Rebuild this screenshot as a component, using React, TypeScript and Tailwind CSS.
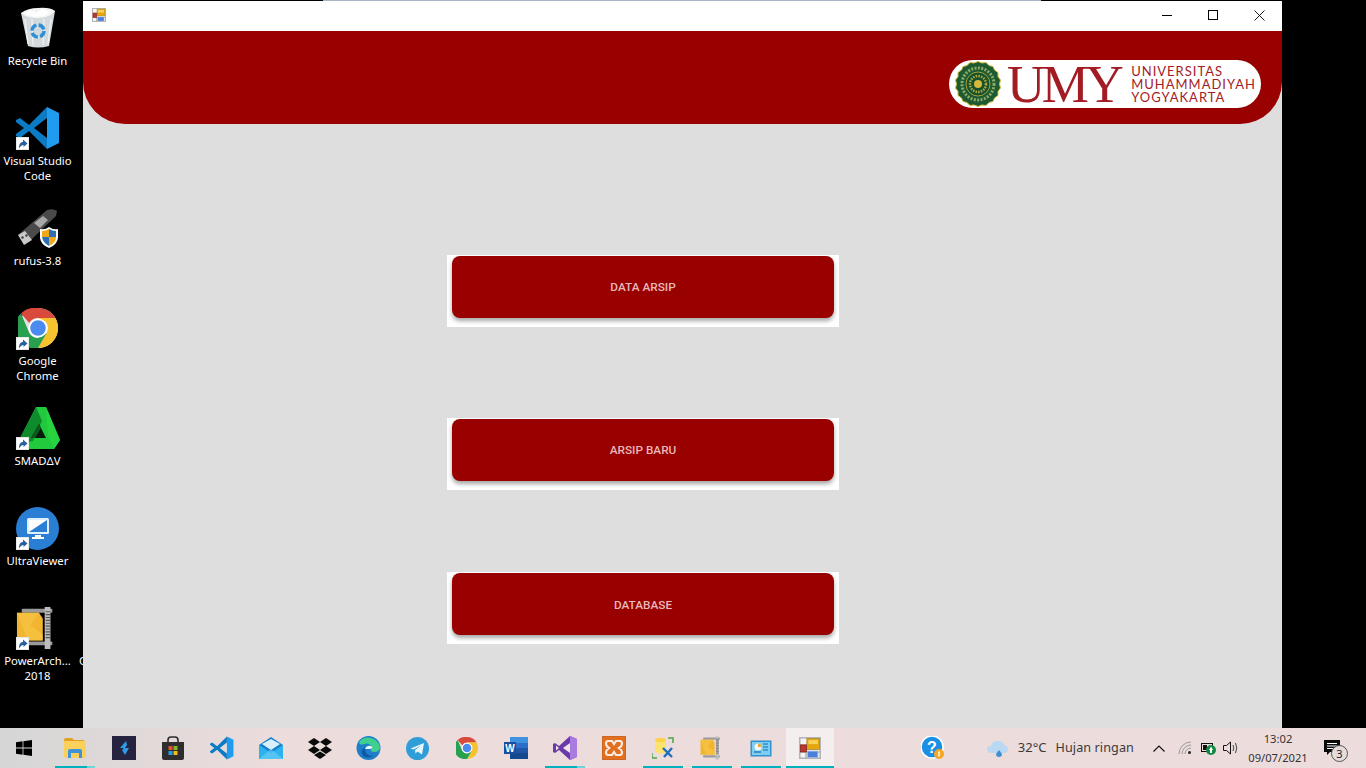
import React from "react";

const Shortcut = () => (
  <svg className="absolute left-0 bottom-0" width="13" height="13" viewBox="0 0 13 13">
    <rect width="13" height="13" fill="#e8e8e8" />
    <rect x="1" y="1" width="11" height="11" fill="#fff" />
    <path d="M3 11.5 C3 7 4.5 5 7 5 L7 2.5 L11.5 6.5 L7.5 10 L7.5 8 C5.5 8 4.5 9.5 3 11.5 Z" fill="#2a5f9e" />
  </svg>
);

const RecycleBin = () => (
  <svg width="36" height="42" viewBox="0 0 36 42">
    <path d="M1 6 L35 4 L29 39 Q18 42 8 39 Z" fill="#d4d9dc" />
    <path d="M1 6 Q8 1 18 1 Q30 0 35 4 Q30 11 18 11 Q6 11 1 6 Z" fill="#f3f4f5" />
    <path d="M5 7 L10 3 L16 6 L22 2 L30 5 L24 9 L14 10 Z" fill="#ffffff" />
    <path d="M5 12 L8 37 M12 12 L13 38 M24 12 L23 38 M31 12 L28 37" stroke="#eef0f1" strokeWidth="1.4" />
    <circle cx="18" cy="24" r="6" fill="none" stroke="#2c8fd8" strokeWidth="3.4" strokeDasharray="7 2.4" />
  </svg>
);

const VSCodeIcon = ({ size = 44 }: { size?: number }) => (
  <svg width={size} height={size} viewBox="0 0 44 44">
    <path d="M31 1 L43 7 L43 37 L31 43 L31 1 Z" fill="#1f9cf0" />
    <path d="M31 1 L13 19 L4 12 L0 14 L0 16 L8 22 L0 28 L0 30 L4 32 L13 25 L31 43 L31 32 L18 22 L31 12 Z" fill="#0a7bc4" />
  </svg>
);

const Rufus = () => (
  <svg width="42" height="42" viewBox="0 0 42 42">
    <path d="M2 27 L30 3 Q36 1 40 4 L39 9 L14 33 Z" fill="#4a4a4a" />
    <path d="M17 16 L26 9 L31 13 L23 21 Z" fill="#a8a8a8" />
    <path d="M1 28 L8 24 L15 33 L7 38 Z" fill="#c9c9c9" />
    <path d="M4 30 l2 -1 1 2 -2 1z M8 28 l2 -1 1 2 -2 1z" fill="#444" />
    <path d="M32 20 Q36 23 41 22 L41 31 Q40 38 32 41 Q24 38 23 31 L23 22 Q28 23 32 20 Z" fill="#fff" />
    <path d="M32 22 Q29 24 25 24 L25 30 L32 30 Z M32 30 L32 39 Q39 36 39 30 Z" fill="#f0a818" />
    <path d="M32 22 L32 30 L39 30 L39 24 Q35 24 32 22 Z M32 30 L25 30 Q26 36 32 39 Z" fill="#2f6db5" />
  </svg>
);

const Chrome = ({ size = 40 }: { size?: number }) => (
  <svg width={size} height={size} viewBox="0 0 40 40">
    <circle cx="20" cy="20" r="20" fill="#e0e0e0" />
    <path d="M20 0 A20 20 0 0 1 37.3 10 L20 10 A10 10 0 0 0 11.3 15 L3 5.5 A20 20 0 0 1 20 0 Z" fill="#d9493c" />
    <path d="M37.3 10 A20 20 0 0 1 20 40 L28.7 25 A10 10 0 0 0 28.7 15 L20 10 Z" fill="#f6c22d" />
    <path d="M20 40 A20 20 0 0 1 3 5.5 L11.3 25 A10 10 0 0 0 20 30 L28.7 25 Z" fill="#27a050" />
    <circle cx="20" cy="20" r="9.6" fill="#fff" />
    <circle cx="20" cy="20" r="7.8" fill="#4b8bf0" />
  </svg>
);

const Smadav = () => (
  <svg width="44" height="44" viewBox="0 0 44 44">
    <path d="M20 1 L30 1 L44 34 L38 43 L5 43 L1 38 Z" fill="#22c93c" />
    <path d="M20 1 L26 15 L17 35 L1 38 Z" fill="#0e8c2b" />
    <path d="M23 18 L30 32 L15 32 Z" fill="#071a0b" />
    <path d="M23 18 L15 32 L19 32 L25 22 Z" fill="#0c5a1e" />
    <path d="M30 1 L44 34 L38 43 L32 30 Z" fill="#27d43f" />
  </svg>
);

const Ultra = () => (
  <svg width="43" height="43" viewBox="0 0 43 43">
    <circle cx="21.5" cy="21.5" r="21.5" fill="#2a7fd4" />
    <rect x="11" y="11" width="22" height="16" rx="1.5" fill="#dfeefb" />
    <path d="M13 13 H31 L13 25 Z" fill="#ffffff" />
    <path d="M31 13 V25 H13 Z" fill="#2a7fd4" />
    <path d="M19 28 h6 v2 h3 v2 h-12 v-2 h3 z" fill="#fff" />
  </svg>
);

const PowerArch = ({ size = 46 }: { size?: number }) => (
  <svg width={size} height={size} viewBox="0 0 46 46">
    <rect x="6" y="3" width="32" height="4" rx="1" fill="#9a9a9a" />
    <rect x="6" y="37" width="32" height="4" rx="1" fill="#9a9a9a" />
    <rect x="30" y="1" width="6" height="44" fill="#bdbdbd" />
    <path d="M31 6 h5 M31 9 h5 M31 12 h5 M31 15 h5 M31 18 h5 M31 21 h5 M31 24 h5 M31 27 h5 M31 30 h5 M31 33 h5" stroke="#555" strokeWidth="1.2" />
    <path d="M1 7 H24 L28 13 V36 H1 Z" fill="#f1b52f" />
    <path d="M1 7 H24 L15 20 L28 30 V36 H12 Z" fill="#f5c544" opacity="0.7" />
  </svg>
);

const AppGlyph = ({ size = 16 }: { size?: number }) => (
  <svg width={size} height={size} viewBox="0 0 14 14">
    <rect x="0.5" y="0.5" width="13" height="13" fill="#f4f4f4" stroke="#b4b4b4" />
    <path d="M0.5 9.5 H13.5 M4.5 9.5 V13.5" stroke="#b4b4b4" />
    <rect x="5" y="1" width="8" height="7" fill="#e4a80e" stroke="#a88a3a" strokeWidth="0.5" />
    <rect x="6" y="2" width="6" height="2.5" fill="#f6d35a" />
    <rect x="1" y="5" width="3.8" height="4.5" fill="#c0352b" stroke="#7d231d" strokeWidth="0.5" />
    <rect x="5.5" y="9" width="6.5" height="4" fill="#4a80d8" stroke="#9fb9e4" strokeWidth="0.5" />
  </svg>
);

function DesktopItem({ label, icon, shortcut }: { label: React.ReactNode; icon: React.ReactNode; shortcut?: boolean }) {
  return (
    <div className="h-[100px] w-[75px] shrink-0 flex flex-col items-center">
      <div className="relative w-[44px] h-[44px] mt-[6px] flex items-center justify-center">
        {icon}
        {shortcut && <Shortcut />}
      </div>
      <div className="mt-[3px] text-center text-white text-[11.3px] leading-[15px] font-['Noto_Sans','Open_Sans',sans-serif] whitespace-nowrap">{label}</div>
    </div>
  );
}

const Seal = () => (
  <svg width="46" height="46" viewBox="0 0 46 46">
    <path d="M23 0.5 L27 2 L31 1.5 L34 4.5 L38 5.5 L39.5 9 L43 11.5 L43 15.5 L45.5 19 L44.5 23 L45.5 27 L43 30.5 L43 34.5 L39.5 37 L38 40.5 L34 41.5 L31 44.5 L27 44 L23 45.5 L19 44 L15 44.5 L12 41.5 L8 40.5 L6.5 37 L3 34.5 L3 30.5 L0.5 27 L1.5 23 L0.5 19 L3 15.5 L3 11.5 L6.5 9 L8 5.5 L12 4.5 L15 1.5 L19 2 Z" fill="#1c5b32" stroke="#d8bd3e" strokeWidth="1" />
    <circle cx="23" cy="23" r="16" fill="none" stroke="#8fa866" strokeWidth="3" strokeDasharray="2 1.4" />
    <circle cx="23" cy="23" r="12" fill="#15512c" stroke="#c9b23e" strokeWidth="0.8" />
    <circle cx="23" cy="23" r="8" fill="none" stroke="#b7a83c" strokeWidth="2.5" strokeDasharray="1.5 1.2" />
    <circle cx="23" cy="23" r="4" fill="#d6b93a" />
  </svg>
);

function AppButton({ label, tall }: { label: string; tall?: boolean }) {
  return (
    <div className="w-[392px] h-[72px] bg-white pt-px px-[5px]">
      <div className={`h-[62px] rounded-[8px] bg-[#990000] shadow-[0_3px_4px_rgba(0,0,0,0.35)] flex items-center justify-center text-[11.8px] font-medium text-[#e9b8b8] font-['Roboto',sans-serif] ${tall ? "pt-[4px]" : "pt-[2px]"}`}>
        {label}
      </div>
    </div>
  );
}

function TaskCell({ children, state, wide }: { children: React.ReactNode; state?: "run" | "open" | "active"; wide?: boolean }) {
  const size = wide ? "w-[50px] pr-[2px]" : state === "active" ? "w-[48px] ml-px bg-[#f4eeee]" : "w-[49px]";
  return (
    <div className={`relative h-[40px] shrink-0 flex items-center justify-center ${size}`}>
      {children}
      {(state === "run" || state === "open") && (
        <div className="absolute bottom-0 left-[5px] w-[40px] h-[2px] flex">
          <div className={`h-full ${state === "open" ? "w-[32px]" : "w-full"} bg-[#00b2bd]`} />
          {state === "open" && <div className="h-full w-[8px] bg-[#6fd3d8]" />}
        </div>
      )}
      {state === "active" && <div className="absolute bottom-0 left-0 right-0 h-[2px] bg-[#00b2bd]" />}
    </div>
  );
}

export default function App() {
  return (
    <div className="w-[1366px] h-[768px] overflow-hidden bg-black flex flex-col font-['Noto_Sans',sans-serif]">
      <div className="h-[728px] flex shrink-0">
        <div className="relative w-[83px] shrink-0 overflow-hidden flex flex-col items-start">
          <DesktopItem label="Recycle Bin" icon={<RecycleBin />} />
          <DesktopItem label={<>Visual Studio<br />Code</>} icon={<VSCodeIcon />} shortcut />
          <DesktopItem label="rufus-3.8" icon={<Rufus />} />
          <DesktopItem label={<>Google<br />Chrome</>} icon={<Chrome />} shortcut />
          <DesktopItem label="SMADΔV" icon={<Smadav />} shortcut />
          <DesktopItem label="UltraViewer" icon={<Ultra />} shortcut />
          <DesktopItem label={<>PowerArch...<br />2018</>} icon={<PowerArch />} shortcut />
          <div className="absolute left-[79px] top-[653px] text-white text-[11.3px] leading-[15px]">C</div>
        </div>
        <div className="w-[1199px] shrink-0 flex flex-col">
          <div className="h-px shrink-0 bg-black flex">
            <div className="ml-[240px] w-[718px] h-full bg-[#a9b4c8]" />
          </div>
          <div className="h-[30px] shrink-0 bg-white flex items-center text-black">
            <div className="ml-[9px] mt-[-2px]"><AppGlyph size={14} /></div>
            <div className="ml-auto flex items-center mt-[-2px]">
              <div className="w-[46px] flex justify-center">
                <svg width="10" height="10" viewBox="0 0 10 10"><path d="M0 5.5 H10" stroke="#000" strokeWidth="1" /></svg>
              </div>
              <div className="w-[46px] flex justify-center">
                <svg width="10" height="10" viewBox="0 0 10 10"><rect x="0.5" y="0.5" width="9" height="9" fill="none" stroke="#000" /></svg>
              </div>
              <div className="w-[46px] flex justify-center">
                <svg width="11" height="11" viewBox="0 0 11 11"><path d="M0.5 0.5 L10.5 10.5 M10.5 0.5 L0.5 10.5" stroke="#000" strokeWidth="0.9" /></svg>
              </div>
            </div>
          </div>
          <div className="flex-1 bg-[#dedede] flex flex-col">
            <div className="h-[93px] shrink-0 bg-[#990000] rounded-b-[42px] flex justify-end items-start pt-[29px] pr-[21px]">
              <div className="w-[312px] h-[48px] bg-white rounded-full flex items-center pl-[6px]">
                <Seal />
                <div className="ml-[6px] text-[53px] leading-none text-[#a31c24] font-['Liberation_Serif',serif] tracking-[-3.5px]">UMY</div>
                <div className="ml-[11px] text-[13px] leading-[13px] text-[#a31c24] font-['Lato',sans-serif] tracking-[1px] whitespace-nowrap">
                  UNIVERSITAS<br />MUHAMMADIYAH<br />YOGYAKARTA
                </div>
              </div>
            </div>
            <div className="flex flex-col pl-[364px] pt-[131px]">
              <AppButton label="DATA ARSIP" />
              <div className="h-[91px]" />
              <AppButton label="ARSIP BARU" />
              <div className="h-[82px]" />
              <AppButton label="DATABASE" tall />
            </div>
          </div>
        </div>
      </div>
      <div className="h-[40px] shrink-0 flex items-center bg-gradient-to-r from-[#d6d6d6] via-[#ecdcdc] via-20% to-[#eddcdc]">
        <TaskCell wide>
          <svg width="16" height="16" viewBox="0 0 16 16"><path d="M0 2.2 L6.6 1.3 V7.5 H0 Z M7.4 1.2 L16 0 V7.5 H7.4 Z M0 8.4 H6.6 V14.7 L0 13.8 Z M7.4 8.4 H16 V16 L7.4 14.8 Z" fill="#000" /></svg>
        </TaskCell>
        <TaskCell state="open">
          <svg width="22" height="20" viewBox="0 0 22 20"><path d="M0 2 Q0 0 2 0 H8 L10 2 H20 V4 H0 Z" fill="#e0a020" /><path d="M0 3 H21 Q22 3 22 4 V18 Q22 20 20 20 H2 Q0 20 0 18 Z" fill="#fbd05c" /><path d="M4 20 V13 Q4 11 6 11 H16 Q18 11 18 13 V20 H15 V15 H7 V20 Z" fill="#3f93d8" /></svg>
        </TaskCell>
        <TaskCell>
          <svg width="24" height="24" viewBox="0 0 24 24"><rect width="24" height="24" fill="#25233f" /><path d="M14 5 L8 12 H12 L10 14 L13 19 L17 12 H13 L15 9 Z" fill="#2e9be8" /></svg>
        </TaskCell>
        <TaskCell>
          <svg width="24" height="24" viewBox="0 0 24 24"><path d="M7 7 V4 Q7 1 10 1 H14 Q17 1 17 4 V7" stroke="#2b2b2b" strokeWidth="1.6" fill="none" /><path d="M1 6 H23 V22 Q23 24 21 24 H3 Q1 24 1 22 Z" fill="#2f2d2d" /><rect x="7.5" y="10" width="4" height="4" fill="#e8532a" /><rect x="12.5" y="10" width="4" height="4" fill="#7fba2a" /><rect x="7.5" y="15" width="4" height="4" fill="#1ba1e8" /><rect x="12.5" y="15" width="4" height="4" fill="#fdb913" /></svg>
        </TaskCell>
        <TaskCell><VSCodeIcon size={24} /></TaskCell>
        <TaskCell>
          <svg width="24" height="24" viewBox="0 0 24 24"><path d="M12 1 L24 9 V23 H0 V9 Z" fill="#1780d0" /><path d="M0 9 L12 17 L24 9 V23 H0 Z" fill="#2cb3ee" /><path d="M3 8 L12 3 L21 8 L12 14 Z" fill="#d8f0fb" /><path d="M0 23 L12 13 L24 23 Z" fill="#6fd0f5" opacity="0.6" /></svg>
        </TaskCell>
        <TaskCell>
          <svg width="24" height="22" viewBox="0 0 24 22"><path d="M6 1 L12 5 L6 9 L0 5 Z M18 1 L24 5 L18 9 L12 5 Z M6 9 L12 13 L6 17 L0 13 Z M18 9 L24 13 L18 17 L12 13 Z M6 18 L12 14.5 L18 18 L12 22 Z" fill="#0a0a0a" /></svg>
        </TaskCell>
        <TaskCell>
          <svg width="25" height="24" viewBox="0 0 25 24"><circle cx="12.5" cy="12" r="12" fill="#1e7fc8" /><path d="M3 6 A12 12 0 0 1 24 11 Q24 16 18 16 Q13 16 16 11 Q13 6 8 8 Q4 10 3 6 Z" fill="#3fcf8e" /><path d="M9 12 Q9 20 17 20 Q12 23 7 20 Q3 14 9 12 Z" fill="#0d5aa7" /><path d="M9 13 Q11 9 15 10 Q18 12 14 13 Z" fill="#f1f8fb" /></svg>
        </TaskCell>
        <TaskCell>
          <svg width="23" height="23" viewBox="0 0 23 23"><circle cx="11.5" cy="11.5" r="11.5" fill="#2f9ed8" /><path d="M4.5 11.5 L18 6 L16 17.5 L11.5 14.5 L9.5 16.5 L9 13 L15 8.5 L7.5 12.5 Z" fill="#e9f5fb" /></svg>
        </TaskCell>
        <TaskCell><Chrome size={22} /></TaskCell>
        <TaskCell>
          <svg width="24" height="22" viewBox="0 0 24 22"><rect x="6" y="0" width="18" height="22" fill="#2a6fc9" /><rect x="6" y="0" width="18" height="6" fill="#3f92e0" /><rect x="6" y="11" width="18" height="5" fill="#1f56a5" /><rect x="6" y="16" width="18" height="6" fill="#164a8f" /><rect x="0" y="5" width="12" height="12" fill="#1a4fa0" /><text x="6" y="14.5" textAnchor="middle" fontSize="10" fontWeight="700" fill="#fff" fontFamily="Liberation Sans">W</text></svg>
        </TaskCell>
        <TaskCell state="open">
          <svg width="24" height="24" viewBox="0 0 24 24"><path d="M17 0 L24 3 V21 L17 24 L6 14 L2 17 L0 16 V8 L2 7 L6 10 Z" fill="#6a3aa8" /><path d="M17 0 L24 3 V21 L17 24 Z" fill="#a97be0" /><path d="M17 7 L10 12 L17 17 Z" fill="#f0e4e4" /><path d="M3 9.5 L6 12 L3 14.5 Z" fill="#f0e4e4" /></svg>
        </TaskCell>
        <TaskCell>
          <svg width="24" height="24" viewBox="0 0 24 24"><rect width="24" height="24" rx="2" fill="#e0701f" stroke="#b85a1e" /><path d="M6 5 H10 L12 8 L14 5 H18 Q20 5 20 8 Q20 10 17 12 Q20 14 20 16 Q20 19 18 19 H14 L12 16 L10 19 H6 Q4 19 4 16 Q4 14 7 12 Q4 10 4 8 Q4 5 6 5 Z" fill="none" stroke="#fbeadf" strokeWidth="2.2" /></svg>
        </TaskCell>
        <TaskCell state="run">
          <svg width="22" height="22" viewBox="0 0 22 22"><path d="M0 16 V21 H5 M16 1 H21 V6" stroke="#4fa34a" strokeWidth="1.5" fill="none" /><path d="M3 4 Q3 1 9 1 Q14 1 14 4 V15 Q10 18 3 15 Z" fill="#fde36e" /><ellipse cx="8.5" cy="3" rx="5.5" ry="2.2" fill="#fbd24a" /><path d="M12 20 L20 11 M11 11 L20 20" stroke="#1f6fb8" strokeWidth="2.4" /></svg>
        </TaskCell>
        <TaskCell state="run"><PowerArch size={24} /></TaskCell>
        <TaskCell state="run">
          <svg width="22" height="17" viewBox="0 0 22 17"><rect x="0.5" y="0.5" width="21" height="16" rx="1" fill="#2f95d6" stroke="#8eb3cc" /><rect x="2" y="2" width="18" height="13" fill="#7fcdf0" /><circle cx="8" cy="7" r="3.5" fill="#f5f7fa" /><path d="M8 7 V3.5 A3.5 3.5 0 0 1 11.5 7 Z" fill="#eca82c" /><path d="M13 4 H18 M13 7 H18 M13 10 H18" stroke="#0d6fb0" strokeWidth="1.2" /><path d="M4 12 H11" stroke="#0d6fb0" strokeWidth="1.2" /></svg>
        </TaskCell>
        <TaskCell state="active"><AppGlyph size={22} /></TaskCell>
        <div className="flex items-center ml-auto h-full text-[#3a3a3a] font-['Noto_Sans',sans-serif]">
          <div className="relative w-[24px] h-[24px] mr-[42px]">
            <svg width="24" height="24" viewBox="0 0 24 24"><circle cx="11" cy="11" r="11" fill="#1a8fe3" stroke="#fff" strokeWidth="1.5" /><text x="11" y="17" textAnchor="middle" fontSize="16" fontWeight="700" fill="#fff" fontFamily="Liberation Sans">?</text><circle cx="18" cy="18" r="5" fill="#f5a623" /><rect x="17.3" y="15.5" width="1.5" height="5" fill="#fff" /></svg>
          </div>
          <svg width="21" height="17" viewBox="0 0 21 17"><path d="M5 13 Q0 13 0 9 Q0 6 4 6 Q5 1 11 1 Q16 1 17 5 Q21 6 21 9 Q21 13 17 13 Z" fill="#b9d9f2" /><path d="M12 10 L15 14 Q15 17 12 17 Q9 17 9 14 Z" fill="#3f8fd6" /></svg>
          <div className="ml-[10px] text-[13px] whitespace-nowrap">32°C</div>
          <div className="ml-[9px] text-[12.6px] whitespace-nowrap tracking-[0.1px]">Hujan ringan</div>
          <svg className="ml-[19px]" width="12" height="7" viewBox="0 0 12 7"><path d="M0.5 6.5 L6 1 L11.5 6.5" fill="none" stroke="#111" strokeWidth="1.2" /></svg>
          <svg className="ml-[13px]" width="14" height="14" viewBox="0 0 14 14"><path d="M1 13 A12 12 0 0 1 13 1 M4 13 A9 9 0 0 1 13 4 M7 13 A6 6 0 0 1 13 7" fill="none" stroke="#9a9a9a" strokeWidth="1" /><circle cx="11.5" cy="11.5" r="1.5" fill="#222" /></svg>
          <svg className="ml-[9px]" width="15" height="14" viewBox="0 0 15 14"><rect x="0.5" y="2.5" width="11" height="8" fill="none" stroke="#111" /><rect x="2" y="4" width="4" height="5" fill="#111" /><circle cx="10" cy="9" r="5" fill="#138a43" /><path d="M10 5.5 L12 9 H11 V12 H9 V9 H8 Z" fill="#fff" /></svg>
          <svg className="ml-[7px]" width="16" height="14" viewBox="0 0 16 14"><path d="M0.5 4.5 H3.5 L7.5 1 V13 L3.5 9.5 H0.5 Z" fill="none" stroke="#111" /><path d="M10 4 Q11.5 7 10 10 M12.5 2 Q15 7 12.5 12" fill="none" stroke="#444" /></svg>
          <div className="ml-[9px] w-[60px] text-[11.2px] leading-[19px] text-center whitespace-nowrap text-[#333] pb-[1px]">
            13:02<br />09/07/2021
          </div>
          <div className="relative w-[58px] h-full shrink-0">
            <svg className="absolute left-[16px] top-[12px]" width="16" height="16" viewBox="0 0 16 16"><path d="M0 0 H16 V12 H6 L3 15 V12 H0 Z" fill="#0a0a0a" /><path d="M3 3.5 H13 M3 6 H13 M3 8.5 H10" stroke="#fff" strokeWidth="1" /></svg>
            <div className="absolute left-[23px] top-[17px] w-[17px] h-[17px] rounded-full border border-[#555] bg-[#e6dcdc] flex items-center justify-center text-[11px] leading-none text-[#222]">3</div>
          </div>
        </div>
      </div>
    </div>
  );
}
